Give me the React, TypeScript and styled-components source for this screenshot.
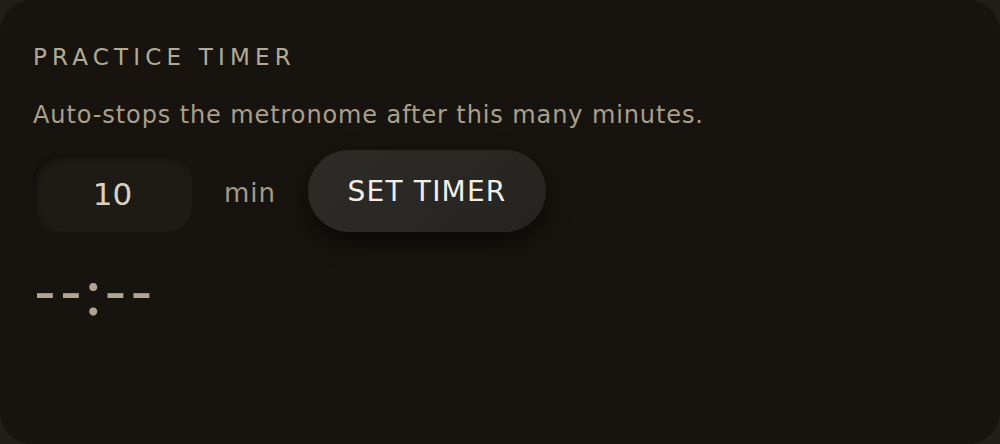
import React from "react";
import styled, { createGlobalStyle } from "styled-components";

const Global = createGlobalStyle`
  html, body { margin: 0; padding: 0; background: #221f1a; }
  body { width: 1000px; height: 444px; overflow: hidden; }
  #root { width: 1000px; height: 444px; }
`;

const Card = styled.section`
  box-sizing: border-box;
  width: 1000px;
  height: 444px;
  border-radius: 32px;
  background: #17140f;
  padding: 40px 33px;
  font-family: "DejaVu Sans", sans-serif;
  display: flex;
  flex-direction: column;
`;

const Title = styled.h2`
  margin: 0;
  font-size: 23px;
  font-weight: 400;
  letter-spacing: 5.2px;
  color: #b4aa94;
  line-height: 32px;
  transform: translateY(1px);
`;

const Desc = styled.p`
  margin: 27px 0 0;
  font-size: 24px;
  letter-spacing: 0.9px;
  color: #a99f8b;
  line-height: 32px;
`;

const Row = styled.div`
  display: flex;
  align-items: flex-end;
  gap: 32px;
  margin-top: 19px;
`;

const NumberBox = styled.div`
  width: 159px;
  height: 77px;
  border-radius: 26px;
  background: #1e1b15;
  box-shadow: inset 3px 3px 6px rgba(0, 0, 0, 0.45), inset -2px -2px 5px rgba(60, 55, 45, 0.15);
  display: flex;
  align-items: center;
  justify-content: center;
  font-size: 31px;
  color: #d9d2c3;
`;

const Unit = styled.span`
  align-self: center;
  font-size: 26px;
  letter-spacing: 1px;
  color: #a49a86;
  margin-top: 4px;
`;

const Button = styled.button`
  width: 238px;
  height: 82px;
  border: none;
  border-radius: 41px;
  background: linear-gradient(135deg, #2d2b27 0%, #2a2824 50%, #252320 100%);
  box-shadow: 0 10px 22px rgba(0, 0, 0, 0.55);
  color: #f3efe6;
  font-family: inherit;
  font-size: 28px;
  letter-spacing: 1.2px;
  cursor: pointer;
  padding: 0;
`;

const Clock = styled.div`
  margin-top: 29px;
  font-family: Lato, sans-serif;
  font-size: 64px;
  font-weight: 400;
  letter-spacing: 2.3px;
  color: #b0a68f;
  line-height: 60px;
`;

export default function App() {
  return (
    <>
      <Global />
      <Card>
        <Title>PRACTICE TIMER</Title>
        <Desc>Auto-stops the metronome after this many minutes.</Desc>
        <Row>
          <NumberBox>10</NumberBox>
          <Unit>min</Unit>
          <Button>SET TIMER</Button>
        </Row>
        <Clock>--:--</Clock>
      </Card>
    </>
  );
}
